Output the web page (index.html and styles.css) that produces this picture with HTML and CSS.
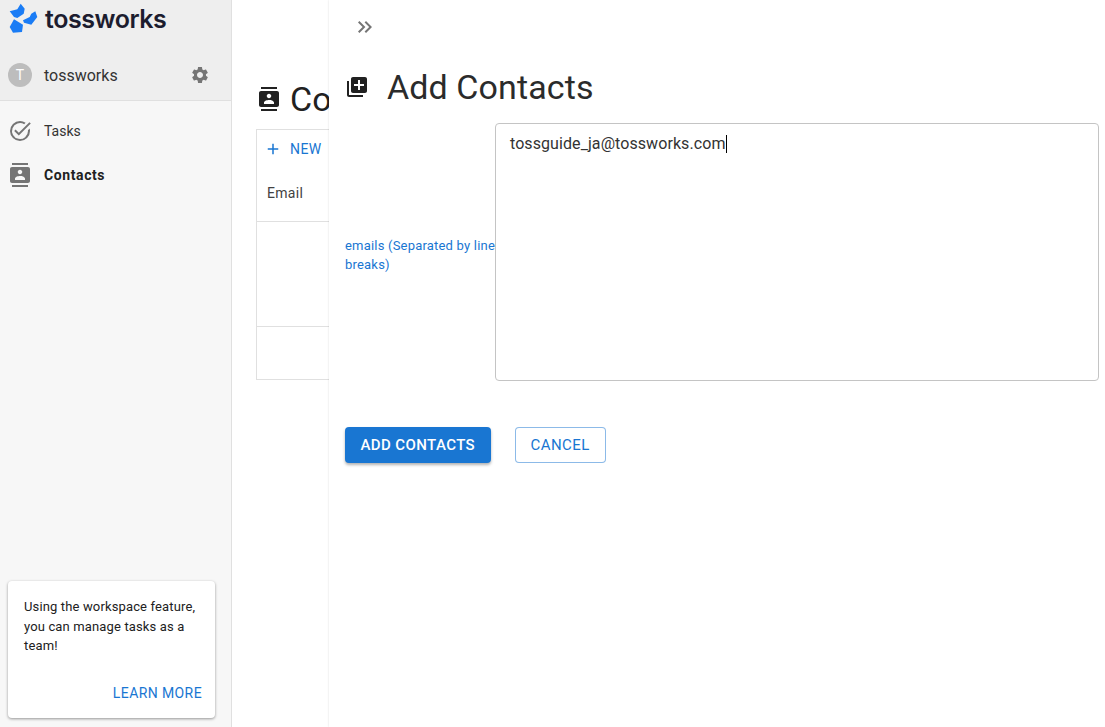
FILE: index.html
```html
<!DOCTYPE html>
<html lang="en">
<head>
    <meta charset="UTF-8">
    <title>Contacts</title>
    <link rel="stylesheet" href="styles.css">
</head>
<body>
    <div class="sidebar">
        <div class="side-head">
            <div class="logo">
                <svg class="logo-mark" viewBox="9 3 30 30" width="30" height="30">
                    <path fill="#1a7cf5" d="M9.700 11.300 L17.300 9.300 L20.700 3.700 L24.700 8.700 L23.700 13.700 L17.300 18 L14 17 Z"/>
                    <path fill="#1a7cf5" d="M35.300 11.300 L37.300 17 L31.300 24.700 L24 22.700 L23 20.300 L29.700 17 L31.300 13.700 Z"/>
                    <path fill="#1a7cf5" d="M14 19.300 L23 24.700 L22 32 L13 32.700 L9.700 27 Z"/>
                </svg>
                <span class="logo-text">tossworks</span>
            </div>
            <div class="workspace">
                <span class="avatar">T</span>
                <span class="workspace-name">tossworks</span>
                <svg class="gear" viewBox="0 0 24 24" width="20" height="20"><path fill="#757575" d="M19.14 12.94c.04-.3.06-.61.06-.94 0-.32-.02-.64-.07-.94l2.03-1.58c.18-.14.23-.41.12-.61l-1.92-3.32c-.12-.22-.37-.29-.59-.22l-2.39.96c-.5-.38-1.03-.7-1.62-.94l-.36-2.54c-.04-.24-.24-.41-.48-.41h-3.84c-.24 0-.43.17-.47.41l-.36 2.54c-.59.24-1.13.57-1.62.94l-2.39-.96c-.22-.08-.47 0-.59.22L2.74 8.87c-.12.21-.08.47.12.61l2.03 1.58c-.05.3-.09.63-.09.94s.02.64.07.94l-2.03 1.58c-.18.14-.23.41-.12.61l1.92 3.32c.12.22.37.29.59.22l2.39-.96c.5.38 1.03.7 1.62.94l.36 2.54c.05.24.24.41.48.41h3.84c.24 0 .44-.17.47-.41l.36-2.54c.59-.24 1.13-.56 1.62-.94l2.39.96c.22.08.47 0 .59-.22l1.92-3.32c.12-.22.07-.47-.12-.61l-2.01-1.58zM12 15.6c-1.98 0-3.6-1.62-3.6-3.6s1.62-3.6 3.6-3.6 3.6 1.62 3.6 3.6-1.62 3.6-3.6 3.6z"/></svg>
            </div>
        </div>
        <ul class="nav">
            <li class="nav-item">
                <svg viewBox="0 0 24 24" width="24" height="24"><path fill="#757575" d="M12 2a10 10 0 1 0 10 10c0-.9-.1-1.700-.3-2.500l-1.800 1.800c0 .2.100.5.100.7a8 8 0 1 1-3.800-6.800l1.400-1.400A10 10 0 0 0 12 2z"/><path fill="#757575" d="M7.600 10.600 6.200 12l4.600 4.600L22.800 4.600 21.400 3.200 10.800 13.800z"/></svg>
                <span>Tasks</span>
            </li>
            <li class="nav-item active">
                <svg viewBox="0 0 24 24" width="24" height="24"><path fill="#757575" d="M20 0H4v2h16V0zM4 24h16v-2H4v2zM20 4H4c-1.100 0-2 .9-2 2v12c0 1.100.9 2 2 2h16c1.100 0 2-.9 2-2V6c0-1.100-.9-2-2-2zm-8 2.750c1.240 0 2.250 1.010 2.250 2.250s-1.010 2.250-2.250 2.250S9.750 10.240 9.750 9 10.760 6.750 12 6.750zM17 17H7v-1.500c0-1.670 3.330-2.500 5-2.500s5 .83 5 2.500V17z"/></svg>
                <span>Contacts</span>
            </li>
        </ul>
        <div class="promo">
            <p>Using the workspace feature, you can manage tasks as a team!</p>
            <a class="learn-more">LEARN MORE</a>
        </div>
    </div>

    <div class="main">
        <h1 class="page-title">
            <svg viewBox="0 0 24 24" width="24" height="24"><path fill="#212121" d="M20 0H4v2h16V0zM4 24h16v-2H4v2zM20 4H4c-1.100 0-2 .9-2 2v12c0 1.100.9 2 2 2h16c1.100 0 2-.9 2-2V6c0-1.100-.9-2-2-2zm-8 2.750c1.240 0 2.250 1.010 2.250 2.250s-1.010 2.250-2.250 2.250S9.750 10.240 9.750 9 10.760 6.750 12 6.750zM17 17H7v-1.500c0-1.670 3.330-2.500 5-2.500s5 .83 5 2.500V17z"/></svg>
            <span>Contacts</span>
        </h1>
        <div class="table-box">
            <div class="toolbar">
                <svg viewBox="0 0 24 24" width="18" height="18"><path fill="#1976d2" d="M19 13h-6v6h-2v-6H5v-2h6V5h2v6h6v2z"/></svg>
                <span>NEW</span>
            </div>
            <div class="table-head">Email</div>
            <div class="table-body"></div>
            <div class="table-foot"></div>
        </div>
    </div>

    <div class="drawer">
        <svg class="collapse" viewBox="0 0 24 24" width="24" height="24"><path fill="#757575" d="M6.410 6 5 7.410 9.580 12 5 16.590 6.410 18l6-6z"/><path fill="#757575" d="M13 6l-1.410 1.410L16.170 12l-4.580 4.590L13 18l6-6z"/></svg>
        <h2 class="drawer-title">
            <svg viewBox="0 0 24 24" width="24" height="24"><path fill="#212121" d="M4 6H2v14c0 1.100.9 2 2 2h14v-2H4V6zm16-4H8c-1.100 0-2 .9-2 2v12c0 1.100.9 2 2 2h12c1.100 0 2-.9 2-2V4c0-1.100-.9-2-2-2zm-1 9h-4v4h-2v-4H9V9h4V5h2v4h4v2z"/></svg>
            <span>Add Contacts</span>
        </h2>
        <div class="form-row">
            <label class="form-label">emails (Separated by line breaks)</label>
            <div class="email-box">tossguide_ja@tossworks.com<span class="caret"></span></div>
        </div>
        <div class="actions">
            <button class="btn-primary">ADD CONTACTS</button>
            <button class="btn-outline">CANCEL</button>
        </div>
    </div>
</body>
</html>
```

FILE: styles.css
```css
html, body {
    height: 100%;
}
body {
    margin: 0;
    height: 727px;
    overflow: hidden;
    display: flex;
    font-family: Roboto, Arial, sans-serif;
    color: #212121;
    background: #fff;
}
.sidebar {
    width: 232px;
    flex-shrink: 0;
    box-sizing: border-box;
    display: flex;
    flex-direction: column;
    background: #f7f7f7;
    border-right: 1px solid #e0e0e0;
}
.side-head {
    height: 101px;
    box-sizing: border-box;
    background: #eeeeee;
    border-bottom: 1px solid #e0e0e0;
}
.logo {
    height: 50px;
    padding: 3px 0 0 9px;
    box-sizing: border-box;
    display: flex;
    align-items: flex-start;
    gap: 6px;
}
.logo-text {
    font-family: Inter, sans-serif;
    font-size: 25px;
    font-weight: 600;
    line-height: 32px;
    letter-spacing: -0.45px;
    color: #1c1c2e;
}
.workspace {
    display: flex;
    align-items: center;
    padding: 0 21px 0 8px;
    height: 50px;
}
.avatar {
    width: 24px;
    height: 24px;
    border-radius: 50%;
    background: #bdbdbd;
    color: #fff;
    font-size: 14px;
    line-height: 24px;
    text-align: center;
    margin-right: 12px;
}
.workspace-name {
    flex: 1;
    font-size: 16px;
    color: #333;
}
.nav {
    list-style: none;
    margin: 8px 0 0;
    padding: 0;
}
.nav-item {
    height: 44px;
    display: flex;
    align-items: center;
    padding-left: 8px;
    gap: 12px;
    font-size: 14px;
    color: #333;
}
.nav-item.active {
    font-weight: 700;
    letter-spacing: 0.6px;
    color: #212121;
}
.promo {
    margin: auto 16px 9px 8px;
    height: 137px;
    box-sizing: border-box;
    padding: 16px 13px 0 16px;
    background: #fff;
    border-radius: 4px;
    box-shadow: 0 1px 3px rgba(0, 0, 0, 0.4);
    font-size: 13px;
    letter-spacing: 0.14px;
    line-height: 19.5px;
    display: flex;
    flex-direction: column;
}
.promo p {
    margin: 0;
    flex: 1;
}
.learn-more {
    color: #1976d2;
    font-size: 14px;
    letter-spacing: 0.4px;
    text-align: right;
    margin-bottom: 15px;
}
.main {
    flex: 1;
    padding: 0 24px;
    min-width: 0;
}
.page-title {
    margin: 78px 0 0 1px;
    height: 51px;
    display: flex;
    align-items: flex-start;
    gap: 9px;
    font-size: 34px;
    font-weight: 400;
    line-height: 42px;
}
.page-title svg {
    margin-top: 9px;
}
.table-box {
    width: 200px;
    height: 251px;
    box-sizing: border-box;
    border: 1px solid #e0e0e0;
}
.toolbar {
    height: 38px;
    display: flex;
    align-items: center;
    gap: 8px;
    padding-left: 7px;
    font-size: 14px;
    letter-spacing: 0.4px;
    color: #1976d2;
}
.table-head {
    height: 54px;
    box-sizing: border-box;
    padding: 17px 0 0 10px;
    font-size: 14px;
    letter-spacing: 0.3px;
    color: #424242;
    border-bottom: 1px solid #e0e0e0;
}
.table-body {
    height: 104px;
    border-bottom: 1px solid #e0e0e0;
}
/* panel slides over the list */
.drawer {
    position: absolute;
    top: 0;
    left: 329px;
    right: 0;
    bottom: 0;
    background: #fff;
    box-shadow: 0 0 2px rgba(0, 0, 0, 0.14);
    padding: 15px 6px 0 16px;
}
.collapse {
    display: block;
    margin-left: 8px;
}
.drawer-title {
    margin: 26px 0 0;
    height: 44px;
    display: flex;
    align-items: center;
    gap: 18px;
    font-size: 34px;
    font-weight: 400;
    letter-spacing: 0.1px;
    color: #2b2b2b;
}
.form-row {
    display: flex;
    align-items: center;
    margin-top: 14px;
}
.form-label {
    width: 150px;
    flex-shrink: 0;
    margin-top: 6px;
    font-size: 13px;
    letter-spacing: 0.2px;
    line-height: 19px;
    color: #1976d2;
}
.email-box {
    flex: 1;
    height: 258px;
    box-sizing: border-box;
    border: 1px solid #c4c4c4;
    border-radius: 4px;
    padding: 10px 14px;
    font-size: 16px;
    letter-spacing: 0.08px;
    line-height: 20px;
    color: #333;
}
.caret {
    display: inline-block;
    width: 1px;
    height: 18px;
    background: #000;
    vertical-align: text-bottom;
}
.actions {
    display: flex;
    gap: 24px;
    margin-top: 46px;
}
.actions button {
    height: 36px;
    border-radius: 4px;
    font-family: inherit;
    font-size: 15px;
    letter-spacing: 0.4px;
}
.btn-primary {
    padding: 0 15.5px;
    background: #1976d2;
    color: #fff;
    border: none;
    font-weight: 500;
    box-shadow: 0 2px 3px rgba(0, 0, 0, 0.3);
}
.btn-outline {
    padding: 0 15px;
    background: #fff;
    color: #1976d2;
    border: 1px solid rgba(25, 118, 210, 0.5);
    font-weight: 400;
}
```
